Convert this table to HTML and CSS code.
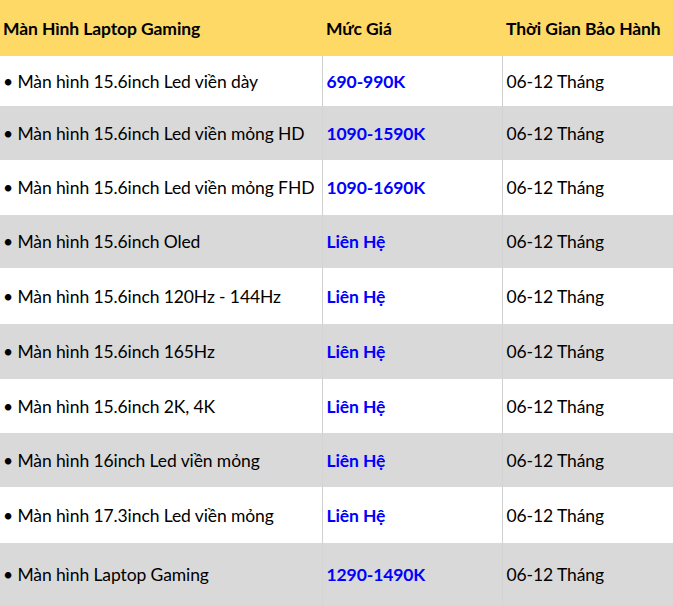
FILE: index.html
```html
<!DOCTYPE html>
<html lang="vi">
<head>
<meta charset="utf-8">
<title>Bảng giá màn hình laptop gaming</title>
<link rel="stylesheet" href="styles.css">
</head>
<body>
<table class="price-table">
  <thead>
    <tr class="head-row">
      <th class="c1">Màn Hình Laptop Gaming</th>
      <th class="c2">Mức Giá</th>
      <th class="c3">Thời Gian Bảo Hành</th>
    </tr>
  </thead>
  <tbody>
    <tr class="r-white h50"><td class="c1">• Màn hình 15.6inch Led viền dày</td><td class="c2 price">690-990K</td><td class="c3">06-12 Tháng</td></tr>
    <tr class="r-grey h54"><td class="c1">• Màn hình 15.6inch Led viền mỏng HD</td><td class="c2 price">1090-1590K</td><td class="c3">06-12 Tháng</td></tr>
    <tr class="r-white h55"><td class="c1">• Màn hình 15.6inch Led viền mỏng FHD</td><td class="c2 price">1090-1690K</td><td class="c3">06-12 Tháng</td></tr>
    <tr class="r-grey h53"><td class="c1">• Màn hình 15.6inch Oled</td><td class="c2 price">Liên Hệ</td><td class="c3">06-12 Tháng</td></tr>
    <tr class="r-white h56"><td class="c1">• Màn hình 15.6inch 120Hz - 144Hz</td><td class="c2 price">Liên Hệ</td><td class="c3">06-12 Tháng</td></tr>
    <tr class="r-grey h55"><td class="c1">• Màn hình 15.6inch 165Hz</td><td class="c2 price">Liên Hệ</td><td class="c3">06-12 Tháng</td></tr>
    <tr class="r-white h54"><td class="c1">• Màn hình 15.6inch 2K, 4K</td><td class="c2 price">Liên Hệ</td><td class="c3">06-12 Tháng</td></tr>
    <tr class="r-grey h54"><td class="c1">• Màn hình 16inch Led viền mỏng</td><td class="c2 price">Liên Hệ</td><td class="c3">06-12 Tháng</td></tr>
    <tr class="r-white h56"><td class="c1">• Màn hình 17.3inch Led viền mỏng</td><td class="c2 price">Liên Hệ</td><td class="c3">06-12 Tháng</td></tr>
    <tr class="r-grey h63"><td class="c1">• Màn hình Laptop Gaming</td><td class="c2 price">1290-1490K</td><td class="c3">06-12 Tháng</td></tr>
  </tbody>
</table>
</body>
</html>
```

FILE: styles.css
```css
html, body {
  margin: 0;
  padding: 0;
  background: #ffffff;
}
.price-table {
  width: 673px;
  border-collapse: collapse;
  table-layout: fixed;
  font-family: "Lato", "Liberation Sans", sans-serif;
  font-size: 17.5px;
  letter-spacing: -0.1px;
  color: #000;
}
.price-table th,
.price-table td {
  padding: 0 0 0 4px;
  text-align: left;
  vertical-align: middle;
  white-space: nowrap;
  overflow: hidden;
}
.c1 { width: 319px; padding-left: 3px !important; }
.c2 { width: 176px; }
.c3 { width: auto; }
.head-row {
  background: #ffd966;
  height: 56px;
}
.head-row th {
  font-weight: 700;
}
.r-white { background: #ffffff; }
.r-grey { background: #d9d9d9; }
.r-white td.c1,
.r-white td.c2 { border-right: 1px solid #d0d0d0; }
.r-grey td.c1,
.r-grey td.c2 { border-right: 1px solid #d4d4d4; }
.price {
  color: #0000ff;
  font-weight: 700;
}
.h50 { height: 50px; }
.h53 { height: 53px; }
.h54 { height: 54px; }
.h55 { height: 55px; }
.h56 { height: 56px; }
.h63 { height: 63px; }
```
